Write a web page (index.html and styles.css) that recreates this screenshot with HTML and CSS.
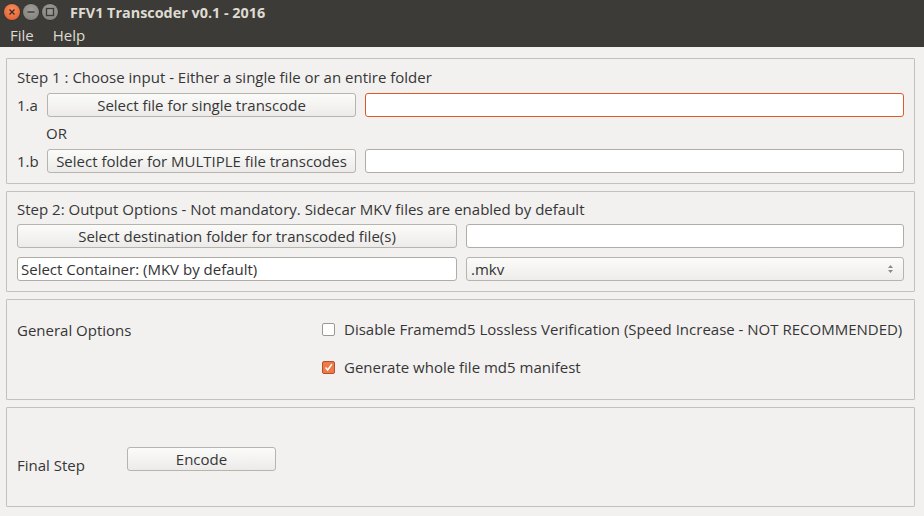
FILE: index.html
```html
<!DOCTYPE html>
<html>
<head>
<meta charset="utf-8">
<link rel="stylesheet" href="styles.css">
</head>
<body>
<div class="titlebar">
  <div class="winbtns">
    <span class="wb close"><svg width="16" height="16" viewBox="0 0 16 16"><path d="M5.5 5.5l5 5M10.5 5.5l-5 5" stroke="#3a2a20" stroke-width="1.3"/></svg></span>
    <span class="wb"><svg width="16" height="16" viewBox="0 0 16 16"><path d="M4.5 8h7" stroke="#3c3b37" stroke-width="1.4"/></svg></span>
    <span class="wb"><svg width="16" height="16" viewBox="0 0 16 16"><rect x="4.5" y="4.5" width="7" height="7" fill="none" stroke="#3c3b37" stroke-width="1.3"/></svg></span>
  </div>
  <div class="wtitle">FFV1 Transcoder v0.1 - 2016</div>
</div>
<div class="menubar">
  <span class="menu">File</span>
  <span class="menu">Help</span>
</div>
<main class="content">
  <section class="group g1">
    <div class="heading">Step 1 : Choose input - Either a single file or an entire folder</div>
    <div class="row">
      <span class="rlabel">1.a</span>
      <button class="btn w309">Select file for single transcode</button>
      <div class="field focus"></div>
    </div>
    <div class="or">OR</div>
    <div class="row">
      <span class="rlabel">1.b</span>
      <button class="btn w309">Select folder for MULTIPLE file transcodes</button>
      <div class="field"></div>
    </div>
  </section>
  <section class="group g2">
    <div class="heading">Step 2: Output Options - Not mandatory. Sidecar MKV files are enabled by default</div>
    <div class="row">
      <button class="btn w440">Select destination folder for transcoded file(s)</button>
      <div class="field"></div>
    </div>
    <div class="row">
      <div class="field texted w440">Select Container: (MKV by default)</div>
      <div class="combo">.mkv
        <svg class="arrows" width="7" height="10" viewBox="0 0 7 10"><path d="M3.5 1L6 4H1z M3.5 9L6 6H1z" fill="#8a8a86"/></svg>
      </div>
    </div>
  </section>
  <section class="group g3">
    <div class="glabel">General Options</div>
    <div class="checks">
      <label class="check"><span class="box"></span>Disable Framemd5 Lossless Verification (Speed Increase - NOT RECOMMENDED)</label>
      <label class="check"><span class="box on"><svg width="13" height="13" viewBox="0 0 13 13"><path d="M3 6.5l2.5 3L10.5 2.5" fill="none" stroke="#fff" stroke-width="1.8"/></svg></span>Generate whole file md5 manifest</label>
    </div>
  </section>
  <section class="group g4">
    <div class="glabel final">Final Step</div>
    <button class="btn encode">Encode</button>
  </section>
</main>
</body>
</html>
```
FILE: styles.css
```css
* { box-sizing: border-box; }
html, body { margin: 0; padding: 0; }
body {
  width: 924px;
  height: 516px;
  overflow: hidden;
  background: #f2f1f0;
  font-family: "Open Sans", "DejaVu Sans", sans-serif;
  font-size: 15px;
  color: #363636;
}
.titlebar {
  height: 24px;
  background: #3c3b37;
  display: flex;
  align-items: center;
  padding-left: 4px;
}
.winbtns { display: flex; gap: 3px; }
.wb {
  width: 16px; height: 16px; border-radius: 50%;
  background: radial-gradient(circle at 50% 35%, #a09e98, #7d7b76);
  display: flex;
  box-shadow: 0 0 0 0.5px #2c2b28;
}
.wb.close { background: radial-gradient(circle at 50% 35%, #f58f5d, #e0572a); }
.wtitle {
  margin-left: 12px;
  color: #dfdbd2;
  font-weight: bold;
  font-size: 14.4px;
}
.menubar {
  height: 23px;
  background: #3c3b37;
  display: flex;
  align-items: center;
  color: #dfdbd2;
  font-size: 15px;
  padding-bottom: 1px;
}
.menu { padding: 0 10px; }
.menu + .menu { padding-left: 9px; }
.content {
  padding: 11px 9px 9px 6px;
  display: flex;
  flex-direction: column;
  gap: 7px;
}
.group {
  border: 1px solid #c4c1bc;
  border-radius: 1px;
  flex: none;
}
.g1 { height: 126px; padding: 8px 10px 0 10px; }
.g2 { height: 101px; padding: 7px 10px 0 10px; }
.g3 { height: 101px; padding: 0 10px; display: flex; align-items: flex-start; }
.g4 { height: 100px; padding: 0 10px; display: flex; align-items: flex-start; }
.heading { height: 20px; line-height: 20px; margin-bottom: 6px; }
.g2 .heading { margin-bottom: 5px; }
.row { display: flex; align-items: center; gap: 9px; height: 24px; }
.g2 .row + .row { margin-top: 9px; }
.rlabel { width: 30px; margin-right: -9px; }
.or { height: 32px; line-height: 32px; padding-left: 29px; }
.btn {
  height: 24px;
  font: inherit;
  color: #363636;
  border: 1px solid #b7b4ae;
  border-radius: 3px;
  background: linear-gradient(#fbfbfa, #ecebe9);
  padding: 0;
  white-space: nowrap;
}
.field {
  flex: 1;
  height: 24px;
  background: #fff;
  border: 1px solid #b0ada7;
  border-radius: 3px;
}
.btn.w309 { width: 309px; flex: none; }
.btn.w440, .field.w440 { width: 440px; flex: none; }
.field.focus { border-color: #e05a26; }
.texted { display: flex; align-items: center; padding-left: 3px; color: #333; }
.combo {
  flex: 1;
  height: 24px;
  border: 1px solid #b7b4ae;
  border-radius: 3px;
  background: linear-gradient(#fbfbfa, #eeedeb);
  display: flex;
  align-items: center;
  justify-content: space-between;
  padding: 0 9px 0 4px;
  color: #333;
}
.arrows { display: block; }
.glabel { margin-top: 20px; width: 305px; line-height: 20px; }
.checks { display: flex; flex-direction: column; gap: 18px; margin-top: 19px; }
.check { display: flex; align-items: center; height: 20px; white-space: nowrap; }
.box {
  width: 13px; height: 13px;
  border: 1px solid #9b9993;
  border-radius: 2px;
  background: #fff;
  margin-right: 9px;
  display: flex;
  align-items: center;
  justify-content: center;
  flex: none;
}
.box.on { background: #ef7a48; border-color: #b4502a; }
.box svg { display: block; }
.final { margin-top: 47px; width: 110px; }
.encode { width: 149px; margin-top: 39px; }
```
